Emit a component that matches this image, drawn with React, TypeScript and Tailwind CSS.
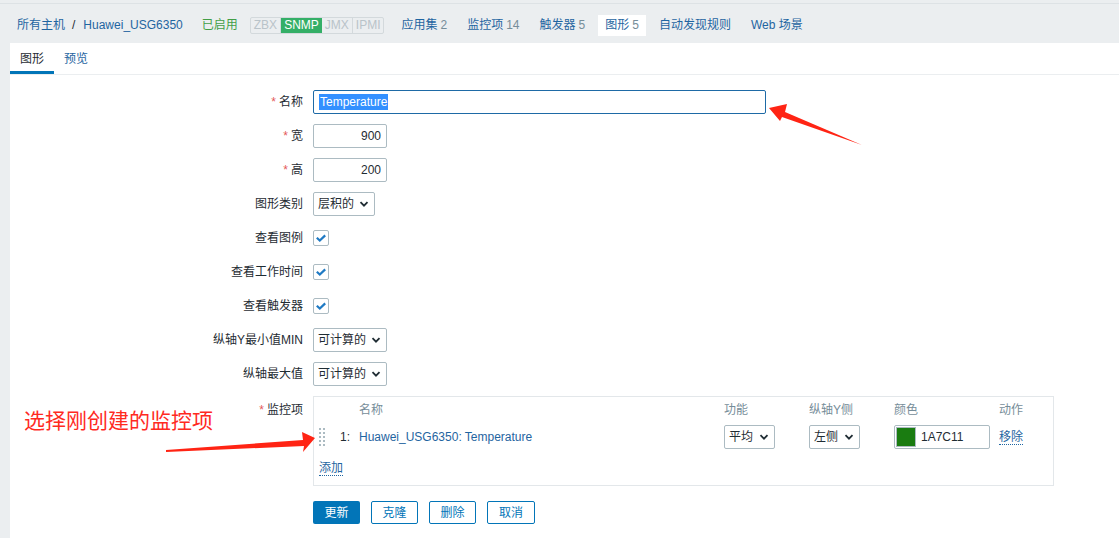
import React from "react";

const font = { fontFamily: '"Liberation Sans", "Noto Sans CJK SC", Arial, sans-serif' };

const hostTabs = [
  { label: "应用集", count: "2" },
  { label: "监控项", count: "14" },
  { label: "触发器", count: "5" },
  { label: "图形", count: "5", active: true },
  { label: "自动发现规则" },
  { label: "Web 场景" },
];

function Chevron() {
  return (
    <svg width="10" height="10" viewBox="0 0 10 10" className="shrink-0">
      <path d="M1.5 3.2 L5 6.7 L8.5 3.2" fill="none" stroke="#1f2c33" strokeWidth="1.8" />
    </svg>
  );
}

function Select({ value, width }: { value: string; width: string }) {
  return (
    <div
      className={`${width} h-[24px] border border-[#acbbc2] rounded-[2px] bg-white flex items-center justify-between pl-[4px] pr-[5px] text-[#1f2c33]`}
    >
      <span>{value}</span>
      <Chevron />
    </div>
  );
}

function Check() {
  return (
    <div className="w-[16px] h-[16px] border border-[#acbbc2] rounded-[2px] bg-white flex items-center justify-center">
      <svg width="12" height="12" viewBox="0 0 12 12">
        <path d="M1.8 5.8 L4.8 8.6 L10.2 3.4" fill="none" stroke="#1f7ac4" strokeWidth="2.2" />
      </svg>
    </div>
  );
}

function Row({ label, req, children, top }: { label: string; req?: boolean; children: React.ReactNode; top?: boolean }) {
  return (
    <div className={`flex ${top ? "items-start" : "items-center"} min-h-[24px]`}>
      <div className={`w-[293px] text-right text-[#1f2c33] leading-[24px] ${top ? "pt-[2px]" : ""}`}>
        {req && <span className="text-[#e45959] mr-[3px]">*</span>}
        {label}
      </div>
      <div className="ml-[10px] flex items-center">{children}</div>
    </div>
  );
}

function Handle() {
  return (
    <svg width="6" height="18" viewBox="0 0 6 18">
      {[0, 4, 8, 12, 16].map((y) => (
        <g key={y}>
          <rect x="0" y={y} width="2" height="2" fill="#acbbc2" />
          <rect x="4" y={y} width="2" height="2" fill="#acbbc2" />
        </g>
      ))}
    </svg>
  );
}

export default function App() {
  return (
    <div className="w-[1119px] h-[538px] bg-[#ebeef0] text-[12px] relative overflow-hidden" style={font}>
      {/* host header */}
      <div className="h-[43px]">
        <div className="h-[3px]" />
        <div className="border-t border-[#dde2e5] h-[40px] pt-[3px] flex items-center pl-[17px]">
          <span className="text-[#1f65a1]">所有主机</span>
          <span className="text-[#1f2c33] ml-[7px] mr-[8px]">/</span>
          <span className="text-[#1f65a1]">Huawei_USG6350</span>
          <span className="text-[#429e47] ml-[19px]">已启用</span>
          <div className="ml-[12px] flex h-[17px] rounded-[2px] border border-[#d3d9dc] overflow-hidden">
            <span className="px-[3px] text-[#b9c3c9] border-r border-[#d3d9dc] leading-[15px]">ZBX</span>
            <span className="px-[3px] bg-[#34af67] text-white leading-[15px]">SNMP</span>
            <span className="px-[3px] text-[#b9c3c9] border-r border-[#d3d9dc] leading-[15px]">JMX</span>
            <span className="px-[3px] text-[#b9c3c9] leading-[15px]">IPMI</span>
          </div>
          <div className="ml-[10px] flex items-center gap-[6px]">
            {hostTabs.map((t) => (
              <div
                key={t.label}
                className={`px-[7px] h-[21px] flex items-center ${t.active ? "bg-white" : ""}`}
              >
                <span className="text-[#1f65a1]">{t.label}</span>
                {t.count && <span className="text-[#768d99] ml-[3px]">{t.count}</span>}
              </div>
            ))}
          </div>
        </div>
      </div>

      {/* panel */}
      <div className="ml-[10px] bg-white h-[495px]">
        <div className="flex h-[32px] border-b border-[#ebeef0]">
          <div className="px-[10px] flex items-center border-b-[3px] border-[#0275b8] text-[#1f2c33] pt-[3px]">图形</div>
          <div className="px-[10px] flex items-center text-[#1f65a1]">预览</div>
        </div>

        <div className="pt-[15px] flex flex-col gap-[10px]">
          <Row label="名称" req>
            <div className="w-[453px] h-[24px] border border-[#1e6aa6] rounded-[2px] flex items-center pl-[5px]">
              <span className="bg-[#3390ff] text-white leading-[16px] px-[1px]">Temperature</span>
            </div>
          </Row>
          <Row label="宽" req>
            <div className="w-[74px] h-[24px] border border-[#acbbc2] rounded-[2px] flex items-center justify-end pr-[5px] text-[#1f2c33]">900</div>
          </Row>
          <Row label="高" req>
            <div className="w-[74px] h-[24px] border border-[#acbbc2] rounded-[2px] flex items-center justify-end pr-[5px] text-[#1f2c33]">200</div>
          </Row>
          <Row label="图形类别">
            <Select value="层积的" width="w-[62px]" />
          </Row>
          <Row label="查看图例">
            <Check />
          </Row>
          <Row label="查看工作时间">
            <Check />
          </Row>
          <Row label="查看触发器">
            <Check />
          </Row>
          <Row label="纵轴Y最小值MIN">
            <Select value="可计算的" width="w-[74px]" />
          </Row>
          <Row label="纵轴最大值">
            <Select value="可计算的" width="w-[74px]" />
          </Row>
          <Row label="监控项" req top>
            <div className="w-[741px] h-[90px] border border-[#e3e7ea] pl-[5px] pt-[5px]">
              <div className="flex h-[16px] items-center text-[#768d99]">
                <div className="w-[40px]" />
                <div className="w-[365px]">名称</div>
                <div className="w-[85px]">功能</div>
                <div className="w-[85px]">纵轴Y侧</div>
                <div className="w-[105px]">颜色</div>
                <div>动作</div>
              </div>
              <div className="flex h-[24px] items-center mt-[7px]">
                <div className="w-[21px] flex items-center">
                  <Handle />
                </div>
                <div className="w-[19px] text-[#1f2c33]">1:</div>
                <div className="w-[365px] text-[#1f65a1]">Huawei_USG6350: Temperature</div>
                <div className="w-[85px]">
                  <Select value="平均" width="w-[51px]" />
                </div>
                <div className="w-[85px]">
                  <Select value="左侧" width="w-[51px]" />
                </div>
                <div className="w-[105px]">
                  <div className="w-[96px] h-[24px] border border-[#acbbc2] rounded-[2px] flex items-center pl-[1px]">
                    <div className="w-[20px] h-[20px] bg-[#1a7c11] border border-[#acbbc2]" />
                    <span className="ml-[5px] text-[#1f2c33]">1A7C11</span>
                  </div>
                </div>
                <div>
                  <span className="text-[#1f65a1] border-b border-dotted border-[#1f65a1]">移除</span>
                </div>
              </div>
              <div className="mt-[11px] h-[16px] flex items-center">
                <span className="text-[#1f65a1] border-b border-dotted border-[#1f65a1] leading-[14px]">添加</span>
              </div>
            </div>
          </Row>
          <div className="flex gap-[11px] pl-[303px] mt-[5px]">
            <div className="w-[47px] h-[23px] bg-[#0275b8] text-white rounded-[2px] flex items-center justify-center">更新</div>
            <div className="w-[47px] h-[23px] border border-[#0275b8] text-[#0275b8] rounded-[2px] flex items-center justify-center">克隆</div>
            <div className="w-[47px] h-[23px] border border-[#0275b8] text-[#0275b8] rounded-[2px] flex items-center justify-center">删除</div>
            <div className="w-[48px] h-[23px] border border-[#0275b8] text-[#0275b8] rounded-[2px] flex items-center justify-center">取消</div>
          </div>
        </div>
      </div>

      {/* annotations */}
      <div className="absolute left-[24px] top-[407px] text-[21px] leading-[28px] text-[#ff2a1f]">选择刚创建的监控项</div>
      <svg className="absolute left-0 top-0 pointer-events-none" width="1119" height="538">
        <polygon points="769,108 787,104 785,112 862,145 782,117 780,121" fill="#ff2414" />
        <polygon points="315,438 302,432 303,440 166,450 166,452 304,446 303,452" fill="#ff2414" />
      </svg>
    </div>
  );
}
